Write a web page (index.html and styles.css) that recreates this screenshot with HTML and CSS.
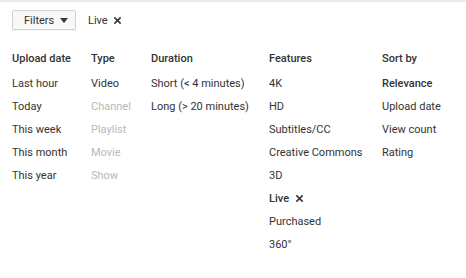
FILE: index.html
```html
<!DOCTYPE html>
<html>
<head>
<meta charset="utf-8">
<link rel="stylesheet" href="styles.css">
</head>
<body>
<div class="topline"></div>
<div class="toolbar">
  <button class="filters-btn">Filters <span class="caret"></span></button>
  <span class="chip">Live <svg class="x" viewBox="0 0 10 10" width="9" height="9"><path d="M1.5 1.5 L8.5 8.5 M8.5 1.5 L1.5 8.5" stroke="#333" stroke-width="1.7" fill="none"/></svg></span>
</div>
<div class="panel">
  <div class="col c1">
    <div class="head">Upload date</div>
    <div class="item">Last hour</div>
    <div class="item">Today</div>
    <div class="item">This week</div>
    <div class="item">This month</div>
    <div class="item">This year</div>
  </div>
  <div class="col c2">
    <div class="head">Type</div>
    <div class="item">Video</div>
    <div class="item dis">Channel</div>
    <div class="item dis">Playlist</div>
    <div class="item dis">Movie</div>
    <div class="item dis">Show</div>
  </div>
  <div class="col c3">
    <div class="head">Duration</div>
    <div class="item">Short (&lt; 4 minutes)</div>
    <div class="item">Long (&gt; 20 minutes)</div>
  </div>
  <div class="col c4">
    <div class="head">Features</div>
    <div class="item">4K</div>
    <div class="item">HD</div>
    <div class="item">Subtitles/CC</div>
    <div class="item">Creative Commons</div>
    <div class="item">3D</div>
    <div class="item sel">Live <svg class="x" viewBox="0 0 10 10" width="9" height="9"><path d="M1.5 1.5 L8.5 8.5 M8.5 1.5 L1.5 8.5" stroke="#333" stroke-width="1.7" fill="none"/></svg></div>
    <div class="item">Purchased</div>
    <div class="item">360°</div>
  </div>
  <div class="col c5">
    <div class="head">Sort by</div>
    <div class="item sel">Relevance</div>
    <div class="item">Upload date</div>
    <div class="item">View count</div>
    <div class="item">Rating</div>
  </div>
</div>
</body>
</html>
```
FILE: styles.css
```css
html, body {
  margin: 0;
  padding: 0;
  background: #fff;
  font-family: Roboto, "Liberation Sans", sans-serif;
  font-size: 11px;
  color: #333;
}
.topline {
  height: 2px;
  background: #ebebeb;
}
.toolbar {
  display: flex;
  align-items: center;
  padding: 8px 0 0 12px;
  height: 20px;
}
.filters-btn {
  display: flex;
  align-items: center;
  gap: 6px;
  height: 20px;
  width: 64px;
  box-sizing: border-box;
  padding: 0 0 0 11px;
  border: 1px solid #d3d3d3;
  border-radius: 2px;
  background: #f8f8f8;
  font-family: Roboto, "Liberation Sans", sans-serif;
  font-size: 11px;
  color: #333;
  box-shadow: 0 1px 0 rgba(0,0,0,0.05);
}
.caret {
  width: 0;
  height: 0;
  border-left: 4.5px solid transparent;
  border-right: 4.5px solid transparent;
  border-top: 5px solid #333;
}
.chip {
  margin-left: 12px;
  display: flex;
  align-items: center;
  gap: 5px;
}
.panel {
  display: flex;
  padding: 17px 0 0 12px;
}
.col {
  display: flex;
  flex-direction: column;
}
.c1 { width: 79px; }
.c2 { width: 60px; }
.c3 { width: 118px; }
.c4 { width: 113px; }
.head {
  font-weight: 500;
  line-height: 23px;
  margin-bottom: 2px;
}
.item {
  line-height: 23px;
  display: flex;
  align-items: center;
  gap: 6px;
  white-space: nowrap;
}
.dis { color: #b8b8b8; }
.sel { font-weight: 500; }
```
